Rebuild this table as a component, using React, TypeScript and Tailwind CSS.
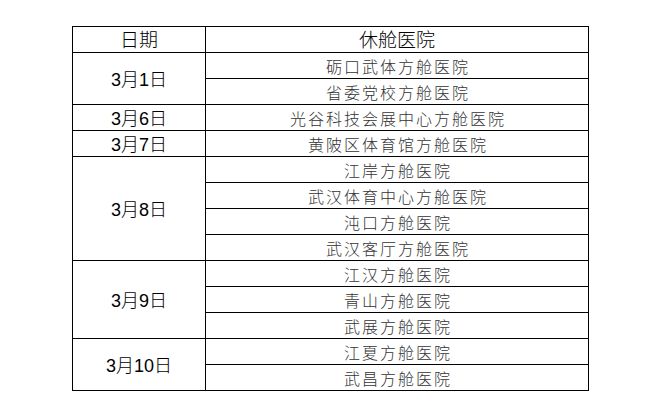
import { Fragment } from "react"

const groups = [
  { date: "3月1日", span: "row-span-2", items: ["砺口武体方舱医院", "省委党校方舱医院"] },
  { date: "3月6日", span: "row-span-1", items: ["光谷科技会展中心方舱医院"] },
  { date: "3月7日", span: "row-span-1", items: ["黄陂区体育馆方舱医院"] },
  {
    date: "3月8日",
    span: "row-span-4",
    items: ["江岸方舱医院", "武汉体育中心方舱医院", "沌口方舱医院", "武汉客厅方舱医院"],
  },
  { date: "3月9日", span: "row-span-3", items: ["江汉方舱医院", "青山方舱医院", "武展方舱医院"] },
  { date: "3月10日", span: "row-span-2", items: ["江夏方舱医院", "武昌方舱医院"] },
]

const sans = "font-['Liberation_Sans','Noto_Sans_CJK_SC',sans-serif]"
const cjk = "font-['Noto_Sans_CJK_SC',sans-serif]"

export default function App() {
  return (
    <div className="w-[649px] h-[417px] bg-white pt-[26px] pl-[72px]">
      <div className="grid w-[517px] grid-cols-[133px_383px] grid-rows-[repeat(14,26px)] border-l border-t border-black text-black">
        <div className={`flex items-center justify-center border-r border-b border-black pt-[3px] text-[19px] font-light ${sans}`}>
          日期
        </div>
        <div className={`flex items-center justify-center border-r border-b border-black pt-[3px] text-[19px] font-light ${sans}`}>
          休舱医院
        </div>
        {groups.map((g) => (
          <Fragment key={g.date}>
            <div
              className={`${g.span} col-start-1 flex items-center justify-center border-r border-b border-black pt-[3px] text-[18px] font-light ${sans}`}
            >
              {g.date}
            </div>
            {g.items.map((h) => (
              <div
                key={h}
                className={`col-start-2 flex items-center justify-center border-r border-b border-black pl-[2px] text-[16px] font-light tracking-[2px] text-[#333] ${cjk}`}
              >
                {h}
              </div>
            ))}
          </Fragment>
        ))}
      </div>
    </div>
  )
}
